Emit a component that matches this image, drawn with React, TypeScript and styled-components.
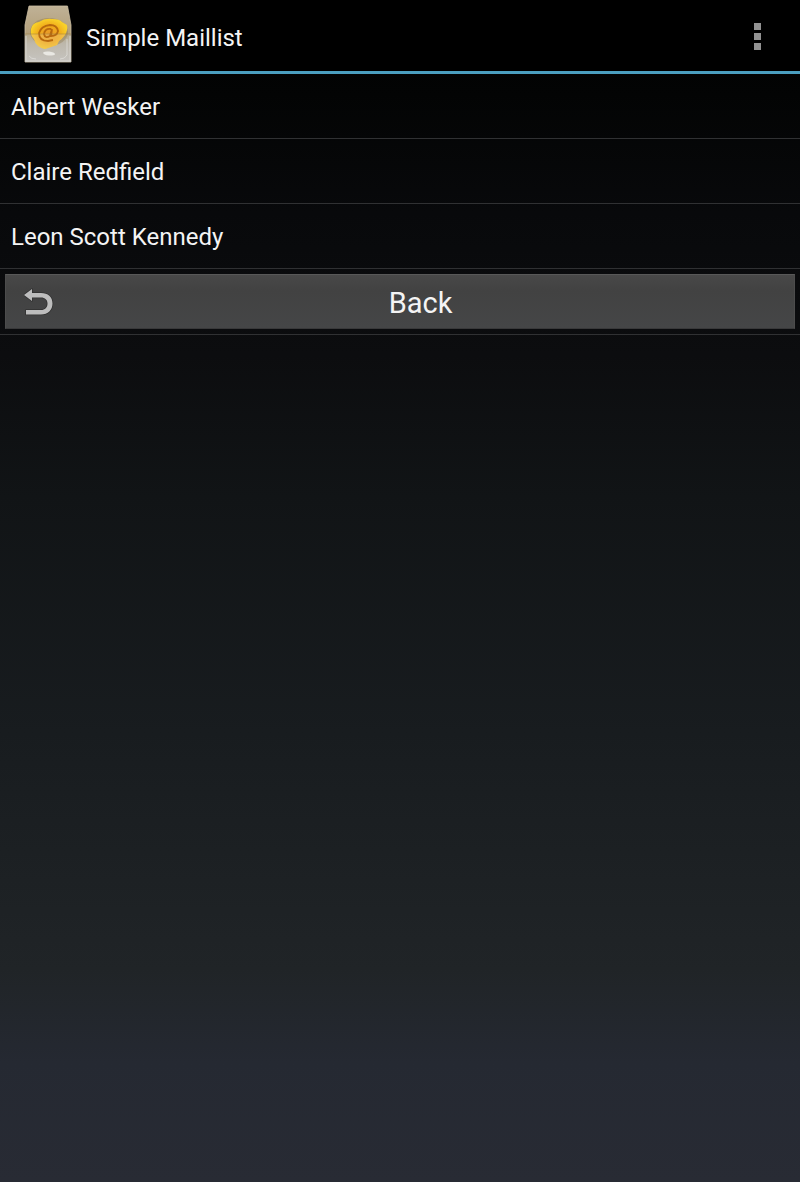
import React from "react";
import styled, { createGlobalStyle } from "styled-components";

const GlobalStyle = createGlobalStyle`
  *, *::before, *::after { box-sizing: border-box; }
  body {
    margin: 0;
    background: #000;
    color: #f4f4f4;
    font-family: Roboto, "Noto Sans", sans-serif;
  }
`;

const Screen = styled.div`
  min-height: 100vh;
  background: linear-gradient(
    to bottom,
    #000000 0%,
    #030404 8%,
    #08090b 18%,
    #0c0d0f 30%,
    #111416 42%,
    #181c1f 62%,
    #202427 82%,
    #252932 90%,
    #282b34 100%
  );
`;

const ActionBar = styled.header`
  display: flex;
  align-items: center;
  height: 74px;
  padding: 0 24px;
  background: #000;
  border-bottom: 3px solid #4b9fc0;
`;

const Title = styled.h1`
  flex: 1;
  margin: 0 0 0 14px;
  padding-top: 4px;
  font-size: 24px;
  line-height: 32px;
  font-weight: 400;
`;

const OverflowButton = styled.button`
  display: flex;
  flex-direction: column;
  align-items: center;
  gap: 3px;
  width: 40px;
  margin-right: -1px;
  padding: 8px 0 6px;
  border: 0;
  background: none;
`;

const Dot = styled.span`
  width: 7px;
  height: 7px;
  background: #929292;
`;

const List = styled.ul`
  margin: 0;
  padding: 0;
  list-style: none;
`;

const Row = styled.li`
  padding: 17px 11px 15px;
  border-bottom: 1px solid #303133;
  font-size: 24px;
  line-height: 32px;
`;

const ActionRow = styled(Row)`
  padding: 5px;
`;

const BackButton = styled.button`
  display: flex;
  align-items: center;
  width: 100%;
  height: 55px;
  padding: 0 18px;
  border: 1px solid #4c4c4c;
  border-top-color: #585858;
  border-bottom-color: #39393a;
  background: linear-gradient(to bottom, #484848, #424242 30%, #454647);
  color: #f4f4f4;
  font-family: inherit;
  font-size: 29px;
  line-height: 40px;
`;

const BackLabel = styled.span`
  flex: 1;
  padding-left: 11px;
  padding-top: 2px;
  text-align: center;
`;

const AppIcon = () => (
  <svg width="48" height="62" viewBox="0 0 48 62" aria-hidden="true">
    <defs>
      <linearGradient id="flap" x1="0" y1="0" x2="0" y2="1">
        <stop offset="0" stopColor="#bfb196" />
        <stop offset="1" stopColor="#a78f60" />
      </linearGradient>
      <linearGradient id="pocket" x1="0" y1="0" x2="0" y2="1">
        <stop offset="0" stopColor="#b5a88a" />
        <stop offset="0.35" stopColor="#bdb8ac" />
        <stop offset="1" stopColor="#c6c4c0" />
      </linearGradient>
      <radialGradient id="coin">
        <stop offset="0" stopColor="#e8982a" />
        <stop offset="0.6" stopColor="#f2ae1c" />
        <stop offset="1" stopColor="#f8d029" />
      </radialGradient>
      <clipPath id="below">
        <path d="M0 29H48V60H0Z" />
      </clipPath>
      <filter id="soft" x="-20%" y="-20%" width="140%" height="140%">
        <feGaussianBlur stdDeviation="0.6" />
      </filter>
    </defs>
    <path d="M5 1H43.500L47 20V57H1V20Z" fill="url(#flap)" stroke="#cdbfa3" strokeWidth="0.8" />
    <path d="M1 29H47V57H1Z" fill="url(#pocket)" />
    <g filter="url(#soft)">
      <ellipse cx="25" cy="27" rx="19" ry="14" fill="#7d6430" opacity="0.3" />
      <path d="M7 24Q8 18 15 17Q21 13 28 14Q36 14 38 17L43 20Q44 25 41 30Q38 34 35 36L33 40Q27 42 21 44Q12 42 10 34Q6 30 7 24Z" fill="url(#coin)" />
      <path d="M7 24Q6 30 10 34Q12 42 21 44Q27 42 33 40L35 36Q38 34 41 30L43 20Z" fill="#eec27a" opacity="0.4" clipPath="url(#below)" />
      <path d="M27 24Q21 23 20 29Q21 34 26 31L28 24L27 31Q33 31 34 26Q33 20 26 20Q17 21 15 28Q15 36 24 36L29 35" fill="none" stroke="#b8690f" strokeWidth="1.8" />
      <ellipse cx="25" cy="48.500" rx="6" ry="2" fill="#e9e8e3" transform="rotate(6 25 48.500)" />
    </g>
    <path d="M1 29H47" stroke="#9b7b3c" strokeWidth="0.8" opacity="0.6" />
    <path d="M2 31V56H46V31" fill="none" stroke="#d6d3cc" strokeWidth="1" />
    <path d="M43 34V50Q41 54 36 54M5 51Q7 54 12 54" fill="none" stroke="#e2e1dd" strokeWidth="1" opacity="0.7" />
  </svg>
);

const BackIcon = () => (
  <svg width="30" height="28" viewBox="0 0 30 28" aria-hidden="true">
    <path
      d="M0 7L8 1V5H17C24 5 28.500 9 28.500 15.500C28.500 22 24 26.500 17 26.500H2V22H17C21 22 23.500 19.500 23.500 15.500C23.500 12 21 9.500 17 9.500H8V13Z"
      fill="#bdbdbd"
      stroke="#303030"
      strokeWidth="1.5"
      strokeLinejoin="round"
      paintOrder="stroke"
    />
  </svg>
);

const contacts = ["Albert Wesker", "Claire Redfield", "Leon Scott Kennedy"];

export default function App() {
  return (
    <>
      <GlobalStyle />
      <Screen>
        <ActionBar>
          <AppIcon />
          <Title>Simple Maillist</Title>
          <OverflowButton type="button" aria-label="More options">
            <Dot />
            <Dot />
            <Dot />
          </OverflowButton>
        </ActionBar>
        <main>
          <List>
            {contacts.map((name) => (
              <Row key={name}>{name}</Row>
            ))}
            <ActionRow>
              <BackButton type="button">
                <BackIcon />
                <BackLabel>Back</BackLabel>
              </BackButton>
            </ActionRow>
          </List>
        </main>
      </Screen>
    </>
  );
}
